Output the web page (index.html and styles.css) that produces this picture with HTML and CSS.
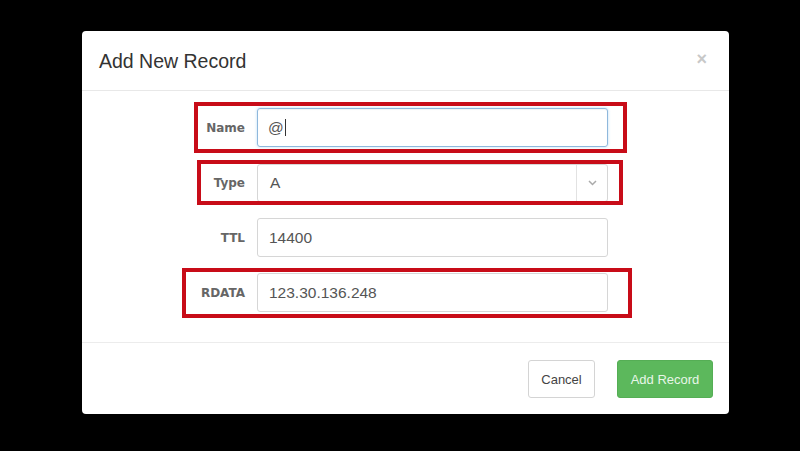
FILE: index.html
```html
<!DOCTYPE html>
<html>
<head>
<meta charset="utf-8">
<link rel="stylesheet" href="styles.css">
</head>
<body>
<div class="modal">
  <div class="modal-header">
    <h4 class="modal-title">Add New Record</h4>
    <span class="close">&times;</span>
  </div>
  <div class="modal-body">
    <div class="row">
      <span class="mark mark-name"></span>
      <label class="label">Name</label>
      <div class="input focus"><span class="val">@</span><span class="caret"></span></div>
    </div>
    <div class="row">
      <span class="mark mark-type"></span>
      <label class="label">Type</label>
      <div class="input select">
        <span class="val">A</span>
        <span class="arrow">
          <svg width="9" height="6" viewBox="0 0 9 6"><path d="M1 1 L4.5 4.5 L8 1" fill="none" stroke="#aaa" stroke-width="1.5"/></svg>
        </span>
      </div>
    </div>
    <div class="row">
      <label class="label">TTL</label>
      <div class="input"><span class="val">14400</span></div>
    </div>
    <div class="row">
      <span class="mark mark-rdata"></span>
      <label class="label">RDATA</label>
      <div class="input"><span class="val">123.30.136.248</span></div>
    </div>
  </div>
  <div class="modal-footer">
    <button class="btn btn-default">Cancel</button>
    <button class="btn btn-success">Add Record</button>
  </div>
</div>
</body>
</html>
```

FILE: styles.css
```css
* { box-sizing: border-box; }
html, body { margin: 0; padding: 0; }
body {
  width: 800px;
  height: 451px;
  background: #000;
  padding: 31px 0 0 82px;
  font-family: "Liberation Sans", Arial, sans-serif;
  overflow: hidden;
}
.modal {
  width: 647px;
  height: 383px;
  background: #fff;
  border-radius: 4px;
  display: flex;
  flex-direction: column;
}
.modal-header {
  height: 60px;
  border-bottom: 1px solid #e8e8e8;
  display: flex;
  align-items: center;
  justify-content: space-between;
  padding: 1px 22px 0 17px;
}
.modal-title {
  margin: 0;
  font-weight: normal;
  font-size: 19.5px;
  color: #333;
}
.close {
  font-size: 18px;
  font-weight: bold;
  color: #c8c8c8;
  line-height: 1;
  margin-top: -4px;
}
.modal-body {
  height: 252px;
  padding-top: 17px;
  display: flex;
  flex-direction: column;
  gap: 16px;
  border-bottom: 1px solid #ececec;
}
.row {
  position: relative;
  display: grid;
  grid-template-columns: 163px 351px;
  column-gap: 12px;
  align-items: center;
  height: 39px;
}
.label {
  text-align: right;
  font-family: "DejaVu Sans", Verdana, sans-serif;
  font-weight: bold;
  font-size: 12px;
  color: #666;
}
.input {
  height: 39px;
  border: 1px solid #d6d6d6;
  border-radius: 3px;
  display: flex;
  align-items: center;
  padding-left: 11px;
  font-size: 15.5px;
  color: #555;
}
.input.focus {
  border-color: #8fb8dc;
  box-shadow: inset 0 1px 1px rgba(0,0,0,.05), 0 0 3px rgba(102,175,233,.45);
  padding-left: 10px;
}
.caret {
  display: inline-block;
  width: 1px;
  height: 17px;
  background: #333;
  margin-left: 1px;
}
.input.select {
  padding-left: 12px;
  height: 38px;
}
.input.select .val { flex: 1; }
.arrow {
  width: 31px;
  height: 100%;
  border-left: 1px solid #e2e2e2;
  display: flex;
  align-items: center;
  justify-content: center;
}
.mark {
  position: absolute;
  border: 4px solid #c80c18;
}
.mark-name { left: 112px; width: 433px; top: -6px; bottom: -6px; }
.mark-type { left: 115px; width: 426px; top: -3px; bottom: -3px; }
.mark-rdata { left: 100px; width: 450px; top: -5px; bottom: -6px; }
.modal-footer {
  flex: 1;
  display: flex;
  justify-content: flex-end;
  align-items: flex-start;
  gap: 22px;
  padding: 17px 16px 0 0;
}
.btn {
  height: 38px;
  border-radius: 3px;
  font-family: "Liberation Sans", Arial, sans-serif;
  font-size: 13px;
  padding: 0;
  cursor: pointer;
}
.btn-default {
  width: 67px;
  background: #fff;
  border: 1px solid #d4d4d4;
  color: #444;
}
.btn-success {
  width: 96px;
  background: #5cb85c;
  border: 1px solid #55ae55;
  color: #e8f6e8;
}
```
